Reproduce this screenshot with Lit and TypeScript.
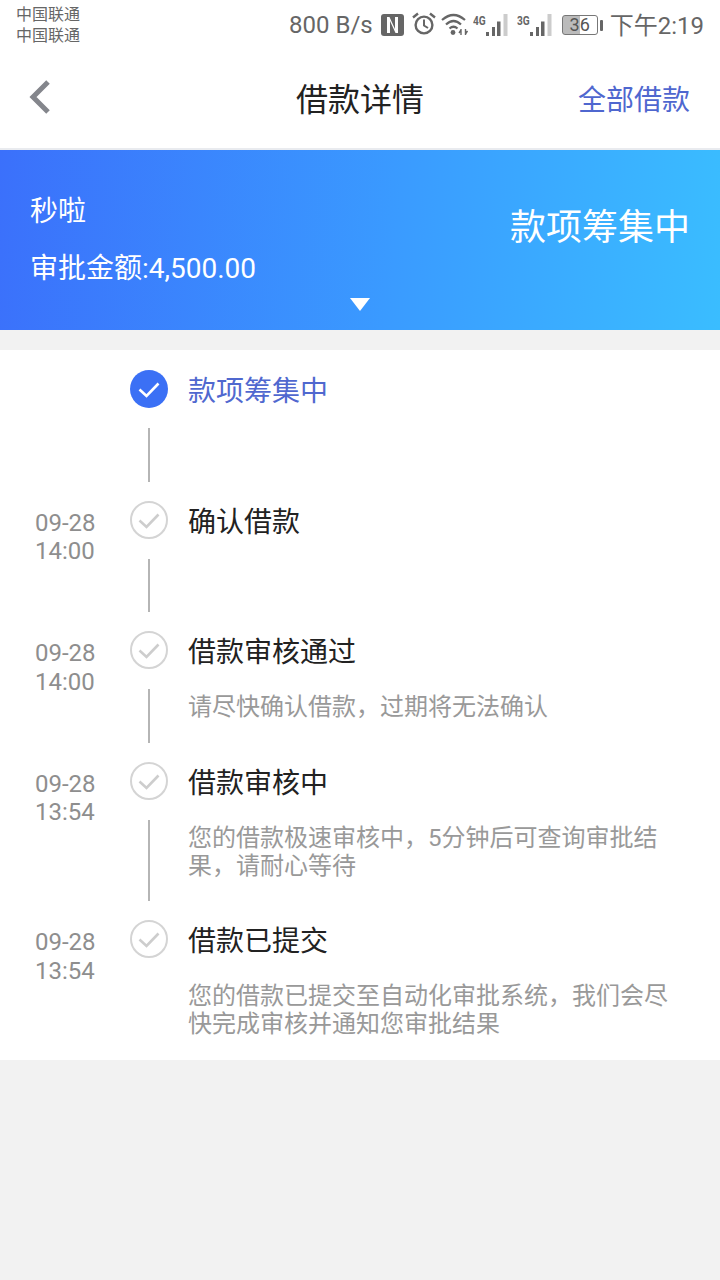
import { LitElement, html, css, svg } from "lit";
import { customElement } from "lit/decorators.js";

interface Step { date?: string; time?: string; title: string; desc?: string[]; active?: boolean; }

const STEPS: Step[] = [
  { title: "款项筹集中", active: true },
  { date: "09-28", time: "14:00", title: "确认借款" },
  { date: "09-28", time: "14:00", title: "借款审核通过", desc: ["请尽快确认借款，过期将无法确认"] },
  { date: "09-28", time: "13:54", title: "借款审核中", desc: ["您的借款极速审核中，5分钟后可查询审批结", "果，请耐心等待"] },
  { date: "09-28", time: "13:54", title: "借款已提交", desc: ["您的借款已提交至自动化审批系统，我们会尽", "快完成审核并通知您审批结果"] },
];

const signal = (label: string) => html`
  <span class="sig">
    <span class="sig-label">${label}</span>
    <svg width="23" height="22" viewBox="0 0 23 22">
      <rect x="0" y="18" width="3" height="4" fill="#666"/>
      <rect x="6" y="13" width="3" height="9" fill="#666"/>
      <rect x="11" y="7.500" width="3.500" height="14.500" fill="#666"/>
      <rect x="17.500" y="0" width="4" height="22" fill="#ccc"/>
    </svg>
  </span>`;

@customElement("app-root")
export class AppRoot extends LitElement {
  static styles = css`
    :host {
      display: block;
      width: 720px;
      height: 1280px;
      background: #f2f2f2;
      font-family: Roboto, "Noto Sans CJK SC", sans-serif;
      overflow: hidden;
    }
    .status {
      height: 50px;
      background: #fff;
      display: flex;
      justify-content: space-between;
      align-items: center;
      padding: 0 16px 0 16px;
      color: #666;
    }
    .carriers { font-size: 16px; line-height: 21px; color: #666; margin-top: -1px; }
    .carriers div { height: 21px; }
    .indicators { display: flex; align-items: center; height: 50px; }
    .speed { font-size: 24px; margin-right: 8px; }
    .icon { display: block; }
    .n { margin-right: 8px; margin-top: -1px; }
    .alarm { margin-right: 5px; margin-top: -2px; }
    .wifi { margin-right: 5px; margin-top: -2px; }
    .sig { position: relative; display: block; width: 36px; height: 22px; margin-top: -1px; }
    .sig svg { position: absolute; right: 0; top: 0; display: block; }
    .sig-label {
      position: absolute; left: 0; top: 0;
      font-size: 13px; font-weight: 700; line-height: 13px; color: #666;
      transform: scaleX(0.78); transform-origin: left;
    }
    .sig + .sig { margin-left: 8px; }
    .battery { display: flex; align-items: center; margin-left: 9px; }
    .batt-body {
      box-sizing: border-box;
      width: 36px; height: 20px;
      border: 1px solid #777; border-radius: 3px;
      font-size: 18px; line-height: 18px; text-align: center; color: #555;
      background: linear-gradient(90deg, #bbb 50%, #fff 50%);
    }
    .batt-tip { width: 3px; height: 11px; background: #666; margin-left: 2px; border-radius: 1px; }
    .clock { font-size: 24px; margin: -3px 0 0 7px; color: #666; }

    .nav {
      box-sizing: border-box;
      height: 100px;
      background: #fff;
      border-bottom: 2px solid #e9ebef;
      display: grid;
      grid-template-columns: 1fr auto 1fr;
      align-items: center;
      padding: 0 30px;
    }
    .nav svg { display: block; margin: -5px 0 0 -2px; }
    .nav-title { font-size: 32px; color: #222; line-height: 40px; margin-top: 2px; }
    .nav-link { justify-self: end; font-size: 28px; color: #4f67cf; line-height: 36px; margin-top: 4px; }

    .banner {
      height: 180px;
      background: linear-gradient(95deg, #3b70fb 0%, #3a9bff 55%, #3abdff 100%);
      color: #fff;
      display: flex;
      justify-content: space-between;
      align-items: flex-start;
      position: relative;
      padding: 0 30px;
    }
    .b-left { padding-top: 44px; }
    .b-name { font-size: 28px; line-height: 36px; }
    .b-amount { font-size: 28px; line-height: 36px; margin-top: 21px; }
    .b-status { font-size: 36px; line-height: 46px; margin-top: 55px; }
    .arrow {
      position: absolute; left: 350px; top: 148px;
      width: 0; height: 0;
      border-left: 10px solid transparent;
      border-right: 10px solid transparent;
      border-top: 13px solid #fff;
    }

    .list {
      box-sizing: border-box;
      margin-top: 20px;
      background: #fff;
      padding-top: 20px;
      height: 710px;
    }
    .step {
      display: grid;
      grid-template-columns: 130px 38px 1fr;
      min-height: 130.5px;
    }
    .time {
      padding: 8px 0 0 35px;
      font-size: 24px;
      line-height: 28.5px;
      color: #8e8e8e;
    }
    .rail { display: flex; flex-direction: column; align-items: center; }
    .circle { display: block; flex: none; }
    .line { flex: 1; width: 2px; background: #b5b5b5; margin: 20px 0 19px; }
    .body { padding: 2px 0 40.5px 20px; }
    .title { font-size: 28px; line-height: 40px; color: #222; }
    .title.active { color: #5068cf; }
    .desc { font-size: 24px; line-height: 28px; color: #999; margin-top: 20px; }
  `;

  private circle(active?: boolean) {
    return html`<svg class="circle" width="38" height="38" viewBox="0 0 38 38">
      ${active
        ? svg`<circle cx="19" cy="19" r="19" fill="#3b70f5"/>
              <path d="M9.5 19.5 L16.5 26 L28.5 13.5" fill="none" stroke="#fff" stroke-width="2.6"/>`
        : svg`<circle cx="19" cy="19" r="18" fill="#fff" stroke="#d4d4d4" stroke-width="2"/>
              <path d="M9.5 19.5 L16.5 26 L28.5 13.5" fill="none" stroke="#cdcdcd" stroke-width="2.6"/>`}
    </svg>`;
  }

  render() {
    return html`
      <div class="status">
        <div class="carriers"><div>中国联通</div><div>中国联通</div></div>
        <div class="indicators">
          <span class="speed">800 B/s</span>
          <svg class="icon n" width="23" height="22" viewBox="0 0 23 22">
            <rect width="23" height="22" rx="3" fill="#666"/>
            <path d="M6 3 V19 L9 19 V7 L14.500 19 H17 V3 H14 V15 L8.500 3 Z" fill="#fff"/>
          </svg>
          <svg class="icon alarm" width="24" height="24" viewBox="0 0 24 24">
            <circle cx="12" cy="13" r="8.4" fill="none" stroke="#666" stroke-width="2.4"/>
            <path d="M12 7.500 V13.500 L16 16" fill="none" stroke="#666" stroke-width="2"/>
            <path d="M1 5.500 L6 1.500 M23 5.500 L18 1.500" fill="none" stroke="#666" stroke-width="2.4"/>
          </svg>
          <svg class="icon wifi" width="27" height="24" viewBox="0 0 27 24">
            <path d="M1 8 Q12.500 -2 24 8 M5 12.500 Q12.500 5.500 20 12.500 M8.500 16.500 Q12.500 13 16.500 16.500" fill="none" stroke="#666" stroke-width="2.2"/>
            <circle cx="12" cy="20.500" r="2.400" fill="#666"/>
            <path d="M20 17 V23 M24.500 17 V23 M18 21 L20 18 M26.500 19 L24.500 22" fill="none" stroke="#666" stroke-width="1.4"/>
          </svg>
          ${signal("4G")}
          ${signal("3G")}
          <span class="battery">
            <span class="batt-body">36</span>
            <span class="batt-tip"></span>
          </span>
          <span class="clock">下午2:19</span>
        </div>
      </div>

      <div class="nav">
        <svg width="24" height="34" viewBox="0 0 24 34">
          <path d="M20 2 L5 17 L20 32" fill="none" stroke="#84868c" stroke-width="5"/>
        </svg>
        <div class="nav-title">借款详情</div>
        <div class="nav-link">全部借款</div>
      </div>

      <div class="banner">
        <div class="b-left">
          <div class="b-name">秒啦</div>
          <div class="b-amount">审批金额:4,500.00</div>
        </div>
        <div class="b-status">款项筹集中</div>
        <div class="arrow"></div>
      </div>

      <div class="list">
        ${STEPS.map(
          (s, i) => html`
            <div class="step">
              <div class="time">${s.date ? html`${s.date}<br />${s.time}` : ""}</div>
              <div class="rail">
                ${this.circle(s.active)}
                ${i < STEPS.length - 1 ? html`<div class="line"></div>` : ""}
              </div>
              <div class="body">
                <div class="title ${s.active ? "active" : ""}">${s.title}</div>
                ${s.desc
                  ? html`<div class="desc">${s.desc.map((d) => html`<div>${d}</div>`)}</div>`
                  : ""}
              </div>
            </div>
          `
        )}
      </div>
    `;
  }
}
